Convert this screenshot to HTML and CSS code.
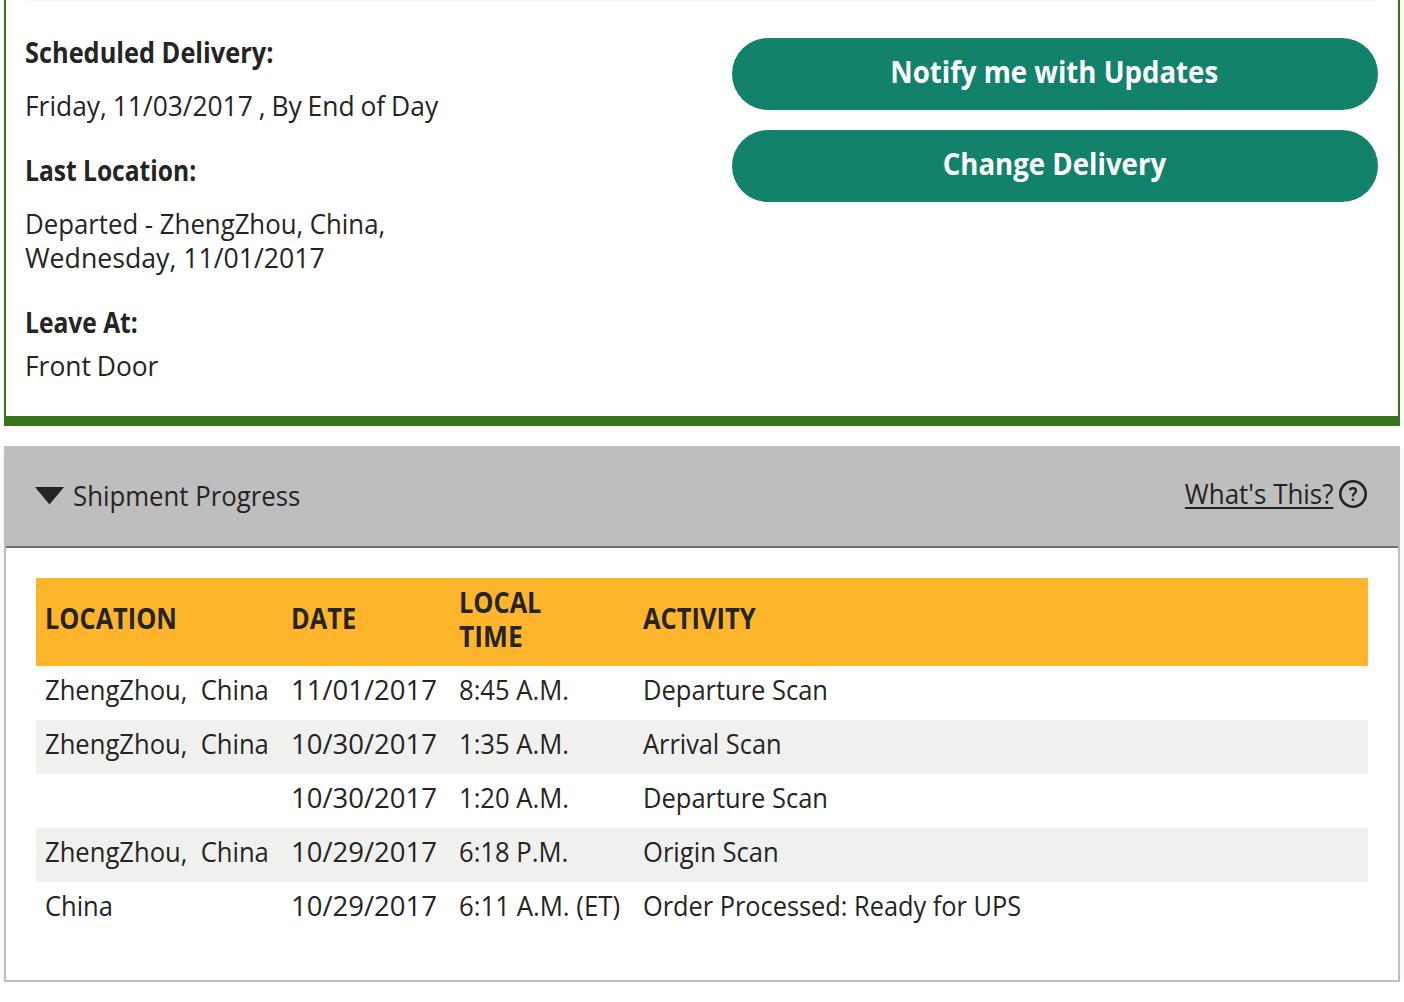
FILE: index.html
```html
<!DOCTYPE html>
<html lang="en">
<head>
<meta charset="utf-8">
<title>Shipment Tracking</title>
<link rel="stylesheet" href="styles.css">
</head>
<body>
<main class="page">
  <section class="summary">
    <div class="details">
      <h2 class="label"><span class="narrow heading">Scheduled Delivery:</span></h2>
      <p class="value"><span class="narrow with-date">Friday, 11/03/2017 , By End of Day</span></p>
      <h2 class="label"><span class="narrow short-label">Last Location:</span></h2>
      <p class="value"><span class="narrow place">Departed - ZhengZhou, China,</span><br><span class="narrow day">Wednesday, 11/01/2017</span></p>
      <h2 class="label label-tight"><span class="narrow short-label">Leave At:</span></h2>
      <p class="value"><span class="narrow with-date">Front Door</span></p>
    </div>
    <div class="actions">
      <button class="btn" type="button"><span class="narrow centered">Notify me with Updates</span></button>
      <button class="btn" type="button"><span class="narrow centered">Change Delivery</span></button>
    </div>
  </section>
  <section class="progress">
    <header class="progress-head">
      <div class="toggle">
        <svg class="caret" width="29" height="18" viewBox="0 0 29 18"><path d="M0 0H29L14.5 17.5Z" fill="#242424"/></svg>
        <span class="narrow title">Shipment Progress</span>
      </div>
      <div class="help">
        <a class="narrow help-link">What's This?</a>
        <svg class="help-icon" width="28" height="28" viewBox="0 0 28 28" fill="none" stroke="#242424"><circle cx="14" cy="14" r="12.7" stroke-width="2.6"/><path d="M10.8 10.2C11.2 8.5 12.5 8.1 14 8.1C15.9 8.1 17 9 17 10.8C17 13.4 13.9 13 13.9 16.4" stroke-width="2.3"/><path d="M13.9 18.5V20.9" stroke-width="2.4"/></svg>
      </div>
    </header>
    <table class="scans">
      <colgroup><col class="c-loc"><col class="c-date"><col class="c-time"><col></colgroup>
      <thead>
        <tr><th><span class="narrow heading">LOCATION</span></th><th><span class="narrow heading">DATE</span></th><th class="two-line"><span class="narrow heading">LOCAL</span><br><span class="narrow with-date">TIME</span></th><th><span class="narrow">ACTIVITY</span></th></tr>
      </thead>
      <tbody>
        <tr><td><span class="narrow city">ZhengZhou,&nbsp; China</span></td><td><span class="narrow date">11/01/2017</span></td><td><span class="narrow city">8:45 A.M.</span></td><td><span class="narrow">Departure Scan</span></td></tr>
        <tr><td><span class="narrow city">ZhengZhou,&nbsp; China</span></td><td><span class="narrow date">10/30/2017</span></td><td><span class="narrow city">1:35 A.M.</span></td><td><span class="narrow heading">Arrival Scan</span></td></tr>
        <tr><td></td><td><span class="narrow date">10/30/2017</span></td><td><span class="narrow city">1:20 A.M.</span></td><td><span class="narrow">Departure Scan</span></td></tr>
        <tr><td><span class="narrow city">ZhengZhou,&nbsp; China</span></td><td><span class="narrow date">10/29/2017</span></td><td><span class="narrow city">6:18 P.M.</span></td><td><span class="narrow city">Origin Scan</span></td></tr>
        <tr><td><span class="narrow">China</span></td><td><span class="narrow date">10/29/2017</span></td><td><span class="narrow title">6:11 A.M. (ET)</span></td><td><span class="narrow heading">Order Processed: Ready for UPS</span></td></tr>
      </tbody>
    </table>
  </section>
</main>
</body>
</html>
```
FILE: styles.css
```css
* { box-sizing: border-box; }

body {
  margin: 0;
  background: #fff;
  color: #242424;
  font: 28px/34px "Open Sans", sans-serif;
}

.page { padding: 0 4px; }

/* Slightly condensed lettering */
.narrow {
  display: inline-block;
  vertical-align: top;
  white-space: nowrap;
  transform: scaleX(.91);
  transform-origin: left center;
}
.heading { transform: scaleX(.905); }
.city { transform: scaleX(.914); }
.with-date { transform: scaleX(.942); word-spacing: -1px; }
.short-label { transform: scaleX(.878); }
.place, .title { transform: scaleX(.92); }
.day { transform: scaleX(.952); }
.date { transform: scaleX(.982); }
.centered { transform: scaleX(.92); transform-origin: center; }

/* Delivery summary */
.summary {
  display: flex;
  height: 426px;
  padding: 0 20px 0 19px;
  border: solid #37751d;
  border-width: 0 2px 10px;
}
.summary::before {
  content: "";
  flex: none;
  width: 1352px;
  height: 1px;
  margin-right: -1352px;
  background: #f7f7f7;
}
.details { padding-top: 34px; }
.label, .value { margin: 0; font-size: 28px; }
.label { padding-top: 1px; margin-bottom: 19px; font-weight: 700; }
.label-tight { margin-bottom: 9px; }
.value { margin-bottom: 30px; }

.actions {
  display: flex;
  flex-direction: column;
  gap: 20px;
  width: 646px;
  margin-left: auto;
  padding-top: 38px;
}
.btn {
  height: 72px;
  padding: 0 2px 5px 0;
  border: 0;
  border-radius: 36px;
  background: #12826a;
  color: #fff;
  font: 700 30px/34px "Open Sans", sans-serif;
}

/* Shipment progress */
.progress {
  height: 536px;
  margin-top: 20px;
  border: 2px solid #bebebe;
  box-shadow: 0 2px 8px rgba(0, 0, 0, .06);
}
.progress-head {
  display: flex;
  justify-content: space-between;
  height: 100px;
  padding: 30px 31px 0 29px;
  background: #bebebe;
  border-bottom: 2px solid #6f6f6f;
}
.toggle, .help { display: flex; align-items: flex-start; }
.caret { margin: 9px 9px 0 0; }
.help { gap: 6px; }
.help-link {
  margin-top: -2px;
  transform: scaleX(.926);
  transform-origin: right center;
  text-decoration: underline;
  text-decoration-thickness: 2px;
  text-underline-offset: 3px;
  text-decoration-skip-ink: none;
}
.help-icon { margin-top: 1.5px; }

.scans {
  width: 1332px;
  margin: 30px 0 0 30px;
  border-collapse: collapse;
  table-layout: fixed;
}
.c-loc { width: 246px; }
.c-date { width: 168px; }
.c-time { width: 184px; }
th, td { height: 54px; padding: 6px 0 14px 9px; text-align: left; }
th { background: #ffb52b; }
th.two-line { padding: 7px 0 13px 9px; }
tbody tr:nth-child(even) { background: #f0f0ee; }
```
